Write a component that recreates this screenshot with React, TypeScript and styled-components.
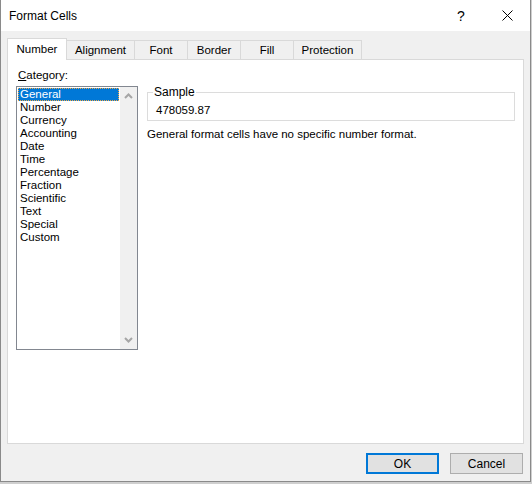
import styled, { createGlobalStyle } from "styled-components";

const GlobalStyle = createGlobalStyle`
  html, body {
    margin: 0;
    padding: 0;
    background: #cfcfcf;
  }
  body {
    font-family: "Liberation Sans", Arial, sans-serif;
    font-size: 11.5px;
    color: #000;
  }
`;

const Window = styled.div`
  width: 531px;
  height: 482px;
  box-sizing: border-box;
  border: 1px solid #8a8a8a;
  border-top: none;
  background: #f0f0f0;
  display: flex;
  flex-direction: column;
`;

const TitleBar = styled.div`
  height: 31px;
  background: #fff;
  display: flex;
  align-items: center;
  padding-left: 8px;
`;

const Title = styled.div`
  flex: 1;
  font-size: 12px;
`;

const TitleButton = styled.div`
  width: 46px;
  height: 31px;
  display: flex;
  align-items: center;
  justify-content: center;
  font-size: 14px;
`;

const Body = styled.div`
  flex: 1;
  display: flex;
  flex-direction: column;
  padding: 7px 6px 8px 6px;
`;

const TabRow = styled.div`
  display: flex;
  align-items: flex-end;
  height: 22px;
  position: relative;
  z-index: 1;
`;

const Tab = styled.div<{ $active?: boolean; $width: number }>`
  box-sizing: border-box;
  width: ${(p) => p.$width}px;
  height: ${(p) => (p.$active ? 22 : 20)}px;
  border: 1px solid #d9d9d9;
  border-left: ${(p) => (p.$active ? "1px solid #d9d9d9" : "none")};
  border-bottom: ${(p) => (p.$active ? "none" : "1px solid #d9d9d9")};
  background: ${(p) => (p.$active ? "#fff" : "#f0f0f0")};
  display: flex;
  align-items: center;
  justify-content: center;
  padding-bottom: ${(p) => (p.$active ? 2 : 0)}px;
`;

const Panel = styled.div`
  margin-top: -1px;
  height: 385px;
  box-sizing: border-box;
  background: #fff;
  border: 1px solid #d9d9d9;
  display: flex;
  gap: 9px;
  padding: 9px 8px 0 8px;
`;

const LeftCol = styled.div`
  display: flex;
  flex-direction: column;
`;

const Label = styled.div`
  height: 17px;
  padding-left: 2px;
`;

const ListBox = styled.div`
  width: 122px;
  height: 264px;
  box-sizing: border-box;
  border: 1px solid #828790;
  display: flex;
`;

const Items = styled.div`
  flex: 1;
  padding: 1px 1px;
`;

const Item = styled.div<{ $selected?: boolean }>`
  height: 13px;
  line-height: 13px;
  box-sizing: border-box;
  padding-left: 1px;
  background: ${(p) => (p.$selected ? "#0078d7" : "transparent")};
  color: ${(p) => (p.$selected ? "#fff" : "#000")};
  border: 1px dotted ${(p) => (p.$selected ? "#f0a848" : "transparent")};
  display: flex;
  align-items: center;
`;

const ScrollBar = styled.div`
  width: 17px;
  background: #f0f0f0;
  display: flex;
  flex-direction: column;
  justify-content: space-between;
  align-items: center;
  padding: 6px 0 6px;
`;

const RightCol = styled.div`
  flex: 1;
  display: flex;
  flex-direction: column;
  padding-top: 17px;
`;

const Fieldset = styled.fieldset`
  margin: 0;
  padding: 0 8px 3px 8px;
  border: 1px solid #dcdcdc;
`;

const Legend = styled.legend`
  padding: 0 1px;
  margin-left: -3px;
  font-size: 12px;
  line-height: 12px;
`;

const SampleValue = styled.div`
  padding-top: 6px;
  line-height: 13px;
`;

const Description = styled.div`
  margin-top: 7px;
  line-height: 13px;
`;

const Footer = styled.div`
  display: flex;
  justify-content: flex-end;
  gap: 11px;
  margin-top: 9px;
  padding-right: 1px;
`;

const Button = styled.button<{ $default?: boolean }>`
  width: 73px;
  height: 21px;
  box-sizing: border-box;
  background: #e1e1e1;
  border: ${(p) => (p.$default ? "2px solid #0078d7" : "1px solid #adadad")};
  font-family: inherit;
  font-size: 12px;
  color: #000;
  padding: 0;
`;

const Chevron = ({ up }: { up?: boolean }) => (
  <svg width="9" height="6" viewBox="0 0 9 6">
    <path
      d={up ? "M1 5 L4.5 1.5 L8 5" : "M1 1 L4.5 4.5 L8 1"}
      fill="none"
      stroke="#a6a6a6"
      strokeWidth="2"
    />
  </svg>
);

const tabs = [
  { name: "Number", width: 60 },
  { name: "Alignment", width: 68 },
  { name: "Font", width: 53 },
  { name: "Border", width: 53 },
  { name: "Fill", width: 53 },
  { name: "Protection", width: 68 },
];

const categories = [
  "General",
  "Number",
  "Currency",
  "Accounting",
  "Date",
  "Time",
  "Percentage",
  "Fraction",
  "Scientific",
  "Text",
  "Special",
  "Custom",
];

export default function App() {
  return (
    <>
      <GlobalStyle />
      <Window>
        <TitleBar>
          <Title>Format Cells</Title>
          <TitleButton>?</TitleButton>
          <TitleButton>
            <svg width="11" height="11" viewBox="0 0 11 11">
              <path d="M0.5 0.5 L10.5 10.5 M10.5 0.5 L0.5 10.5" stroke="#000" strokeWidth="1" />
            </svg>
          </TitleButton>
        </TitleBar>
        <Body>
          <TabRow>
            {tabs.map((t, i) => (
              <Tab key={t.name} $active={i === 0} $width={t.width}>
                {t.name}
              </Tab>
            ))}
          </TabRow>
          <Panel>
            <LeftCol>
              <Label>
                <u>C</u>ategory:
              </Label>
              <ListBox>
                <Items>
                  {categories.map((c, i) => (
                    <Item key={c} $selected={i === 0}>
                      {c}
                    </Item>
                  ))}
                </Items>
                <ScrollBar>
                  <Chevron up />
                  <Chevron />
                </ScrollBar>
              </ListBox>
            </LeftCol>
            <RightCol>
              <Fieldset>
                <Legend>Sample</Legend>
                <SampleValue>478059.87</SampleValue>
              </Fieldset>
              <Description>General format cells have no specific number format.</Description>
            </RightCol>
          </Panel>
          <Footer>
            <Button $default>OK</Button>
            <Button>Cancel</Button>
          </Footer>
        </Body>
      </Window>
    </>
  );
}
